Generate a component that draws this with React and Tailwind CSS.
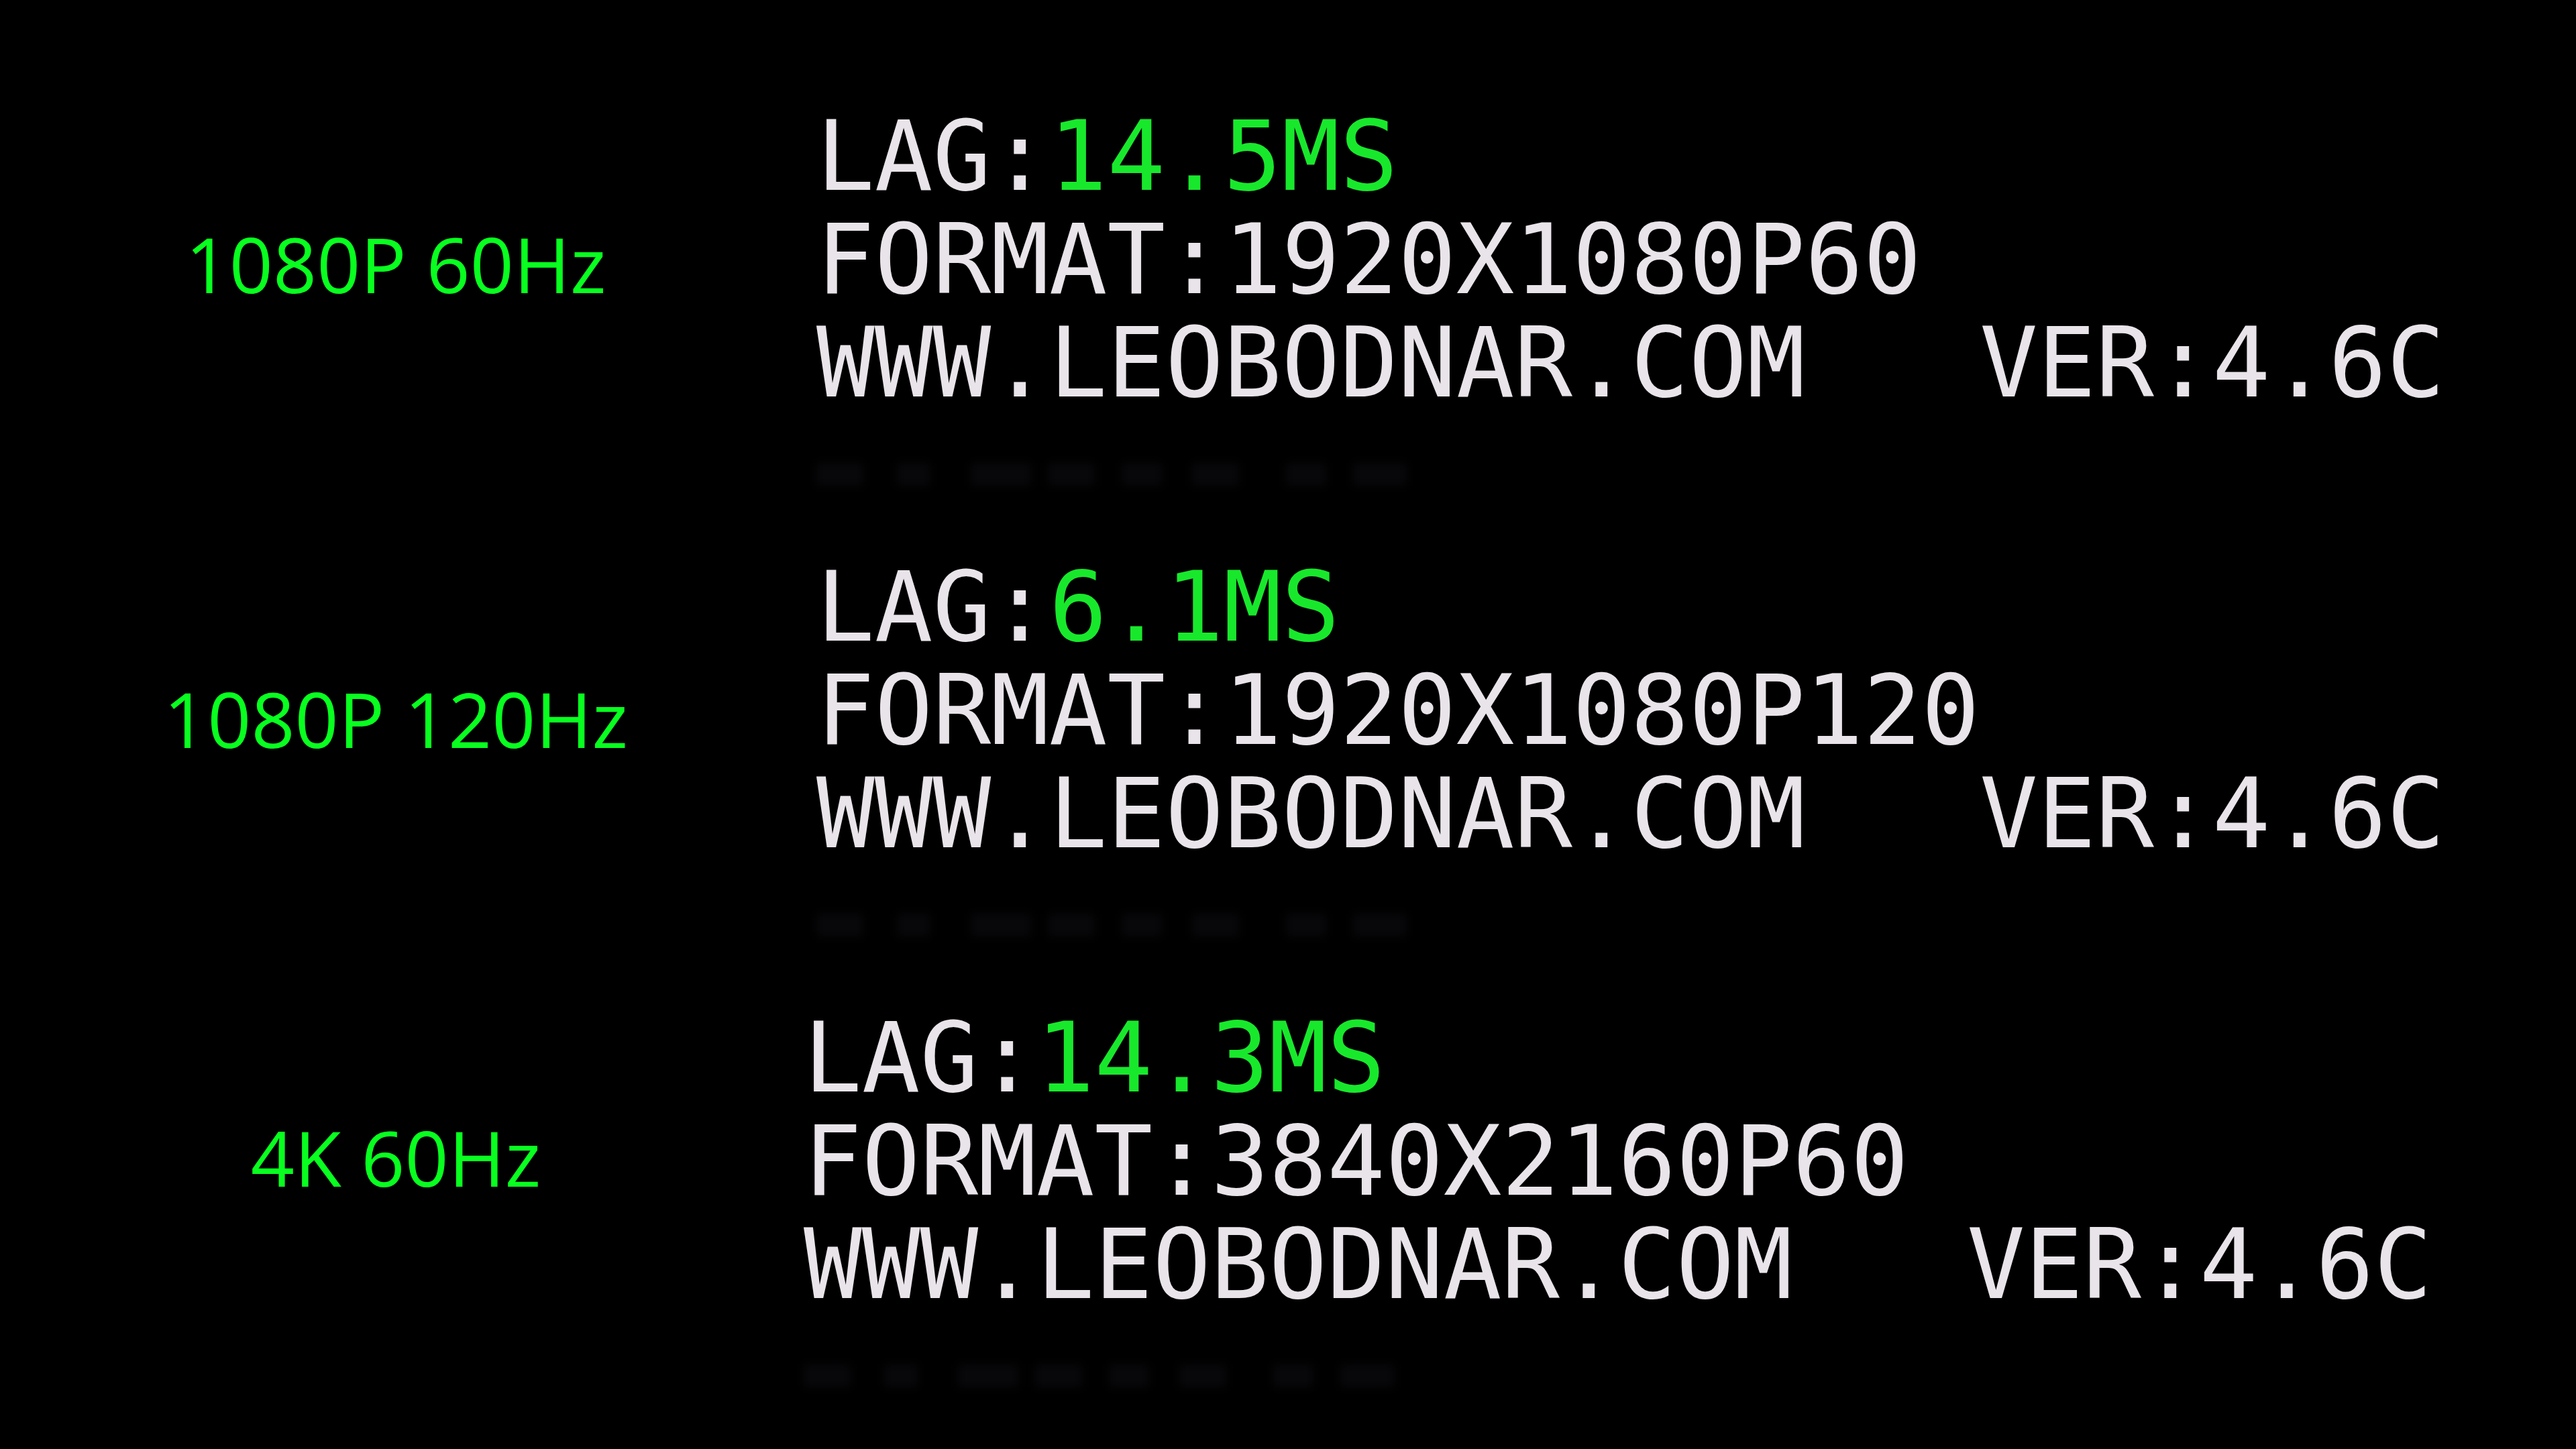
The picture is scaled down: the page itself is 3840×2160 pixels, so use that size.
import React from "react";

const blocks = [
  { label: "1080P 60Hz", lag: "14.5MS", format: "1920X1080P60", shift: "ml-[37px]", labelPad: "pt-[180px]" },
  { label: "1080P 120Hz", lag: "6.1MS", format: "1920X1080P120", shift: "ml-[37px]", labelPad: "pt-[186px]" },
  { label: "4K 60Hz", lag: "14.3MS", format: "3840X2160P60", shift: "ml-[18px]", labelPad: "pt-[168px]" },
];

const ghost = [
  [0, 70], [120, 50], [230, 90], [345, 70], [455, 60], [560, 70], [700, 60], [800, 80],
];

function Block({ b }) {
  return (
    <div className="flex h-[616px]">
      <div className={`w-[1180px] shrink-0 text-center ${b.labelPad}`}>
        <span className="text-[114px] leading-none text-[#08ff1f] [font-family:'Open_Sans','Noto_Sans',sans-serif]">
          {b.label}
        </span>
      </div>
      <div className={`${b.shift} text-[144px] leading-[154px] text-[#e9e4e9] whitespace-pre [font-family:'DejaVu_Sans_Mono',monospace]`}>
        <div>
          LAG:<span className="text-[#18e82c]">{b.lag}</span>
        </div>
        <div>FORMAT:{b.format}</div>
        <div>{"WWW.LEOBODNAR.COM   VER:4.6C"}</div>
        <div className="flex h-[154px] items-center pt-[24px] blur-[7px]">
          {ghost.map(([x, w], i) => (
            <div key={i} className="relative h-[34px] w-0">
              <div className="absolute top-0 h-[34px] bg-[#08080b]" style={{ left: x, width: w }} />
            </div>
          ))}
        </div>
      </div>
    </div>
  );
}

export default function App() {
  return (
    <div className="w-[3840px] h-[2160px] bg-black overflow-hidden pt-[156px] flex flex-col gap-[56px]">
      {blocks.map((b) => (
        <Block key={b.label} b={b} />
      ))}
    </div>
  );
}
